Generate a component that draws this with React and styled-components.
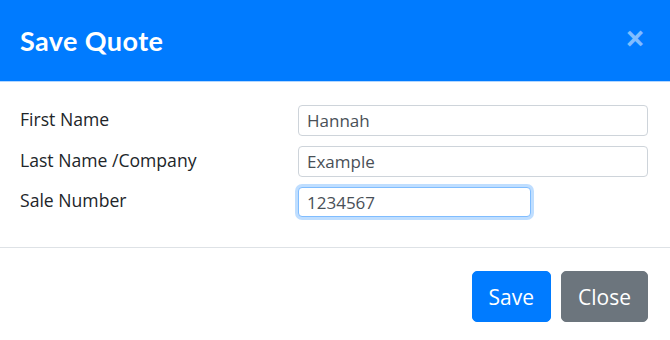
import React from 'react';
import styled, { createGlobalStyle } from 'styled-components';

const GlobalStyle = createGlobalStyle`
  body {
    margin: 0;
    background: #fff;
    font-family: "Open Sans", "Noto Sans", sans-serif;
    color: #212529;
  }
`;

const Modal = styled.div`
  width: 670px;
  background: #fff;
`;

const Header = styled.div`
  height: 81px;
  background: #007bff;
  border-bottom: 1px solid #b3d7ff;
  display: flex;
  align-items: center;
  justify-content: space-between;
  padding: 0 26px 0 20px;
`;

const Title = styled.h5`
  margin: 0;
  color: #fff;
  font-family: "Lato", sans-serif;
  font-weight: 700;
  font-size: 27px;
  letter-spacing: 0.4px;
`;

const CloseX = styled.button`
  border: 0;
  background: none;
  padding: 0 0 4px;
  color: #fff;
  opacity: 0.5;
  font-family: "Liberation Sans", sans-serif;
  font-weight: 700;
  font-size: 31px;
  line-height: 1;
  cursor: pointer;
`;

const Body = styled.div`
  padding: 23px 22px 30px 20px;
  border-bottom: 1px solid #dee2e6;
  display: grid;
  grid-template-columns: 278px 1fr;
  row-gap: 10px;
  align-items: center;
`;

const Label = styled.label`
  font-size: 17.6px;
  line-height: 26px;
  padding-bottom: 4px;
`;

const Input = styled.input`
  box-sizing: border-box;
  height: ${p => (p.$focus ? '30px' : '31px')};
  width: ${p => (p.$narrow ? '233px' : '100%')};
  padding: 0 8px;
  font-family: "Open Sans", "Noto Sans", sans-serif;
  font-size: 17px;
  color: #495057;
  border: 1px solid ${p => (p.$focus ? '#80bdff' : '#ced4da')};
  border-radius: 4px;
  outline: none;
  box-shadow: ${p => (p.$focus ? '0 0 0 3px rgba(0,123,255,.25)' : 'none')};
`;

const Footer = styled.div`
  display: flex;
  justify-content: flex-end;
  gap: 10px;
  padding: 23px 22px 20px;
`;

const Button = styled.button`
  height: 51px;
  padding: 0 16px;
  font-family: "Open Sans", "Noto Sans", sans-serif;
  font-size: 21px;
  color: #fff;
  background: ${p => (p.$variant === 'secondary' ? '#6c757d' : '#007bff')};
  border: 1px solid ${p => (p.$variant === 'secondary' ? '#6c757d' : '#007bff')};
  border-radius: 5px;
  cursor: pointer;
`;

export default function App() {
  return (
    <>
      <GlobalStyle />
      <Modal>
        <Header>
          <Title>Save Quote</Title>
          <CloseX aria-label="Close">×</CloseX>
        </Header>
        <Body>
          <Label>First Name</Label>
          <Input defaultValue="Hannah" />
          <Label>Last Name /Company</Label>
          <Input defaultValue="Example" />
          <Label>Sale Number</Label>
          <Input defaultValue="1234567" $narrow $focus />
        </Body>
        <Footer>
          <Button>Save</Button>
          <Button $variant="secondary">Close</Button>
        </Footer>
      </Modal>
    </>
  );
}
